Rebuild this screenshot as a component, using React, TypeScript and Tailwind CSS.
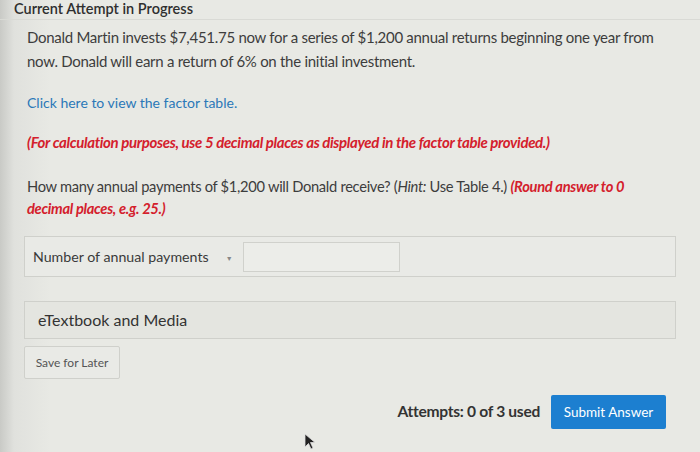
import React from 'react';

const App: React.FC = () => {
  return (
    <div
      className="w-[700px] h-[452px] overflow-hidden bg-[linear-gradient(to_right,#c9cac6_0px,#e0e1dd_14px,#e8e9e4_50px,#e8e9e4_100%)] text-[#3d3d3d] relative"
      style={{ fontFamily: 'Lato, "Open Sans", sans-serif' }}
    >
      <div className="px-[14px] h-[20px] border-b border-[#d9dad5]">
        <h1 className="text-[14.5px] leading-[18px] font-semibold text-[#2f2f2f]">Current Attempt in Progress</h1>
      </div>

      <div className="pl-[27px] pr-[20px]">
        <p className="mt-[5px] text-[15px] leading-[24px] tracking-[-0.28px]">
          Donald Martin invests $7,451.75 now for a series of $1,200 annual returns beginning one year from now.
          Donald will earn a return of 6% on the initial investment.
        </p>

        <p className="mt-[20px] text-[14px] leading-[20px] text-[#2b78b8]">Click here to view the factor table.</p>

        <p className="mt-[19px] text-[15px] leading-[20px] font-bold italic text-[#d4202c] tracking-[-0.35px]">
          (For calculation purposes, use 5 decimal places as displayed in the factor table provided.)
        </p>

        <p className="mt-[23px] w-[630px] text-[14.7px] leading-[22px] tracking-[-0.3px]">
          How many annual payments of $1,200 will Donald receive? (<i>Hint:</i> Use Table 4.){' '}
          <span className="font-bold italic text-[#d4202c]">(Round answer to 0 decimal places, e.g. 25.)</span>
        </p>
      </div>

      <div className="mx-[24px] mt-[17px] w-[652px] h-[41px] border border-[#cfd0cb] bg-[#e9eae6] flex items-center pl-[8px]">
        <span className="text-[14.2px] text-[#3a3a3a]">Number of annual payments</span>
        <span className="ml-[17px] mt-[4px] text-[7px] text-[#888]">▼</span>
        <div className="ml-[10px] w-[157px] h-[30px] border border-[#d0d1cc] bg-[#ecede9]" />
      </div>

      <div className="mx-[24px] mt-[24px] w-[652px] h-[38px] border border-[#cfd0cb] bg-[#e4e5e0] flex items-center pl-[13px]">
        <span className="text-[16px] text-[#333]">eTextbook and Media</span>
      </div>

      <button className="ml-[24px] mt-[7px] w-[96px] h-[33px] border border-[#cfd0cb] rounded-[2px] bg-[#e9eae6] text-[12px] text-[#555] flex items-center justify-center">
        Save for Later
      </button>

      <div className="mt-[16px] pr-[34px] flex justify-end items-center">
        <span className="text-[15.6px] font-bold text-[#333] tracking-[-0.3px]">Attempts: 0 of 3 used</span>
        <button className="ml-[11px] w-[115px] h-[34px] rounded-[2px] bg-[#1c7fd0] text-white text-[13.5px]">
          Submit Answer
        </button>
      </div>

      <svg className="absolute left-[304px] top-[433px]" width="14" height="18" viewBox="0 0 14 18">
        <path d="M1 1 L1 14 L4.5 10.5 L7 16 L9 15 L6.5 9.5 L11 9.5 Z" fill="#222" stroke="#ddd" strokeWidth="0.8" />
      </svg>
    </div>
  );
};

export default App;
